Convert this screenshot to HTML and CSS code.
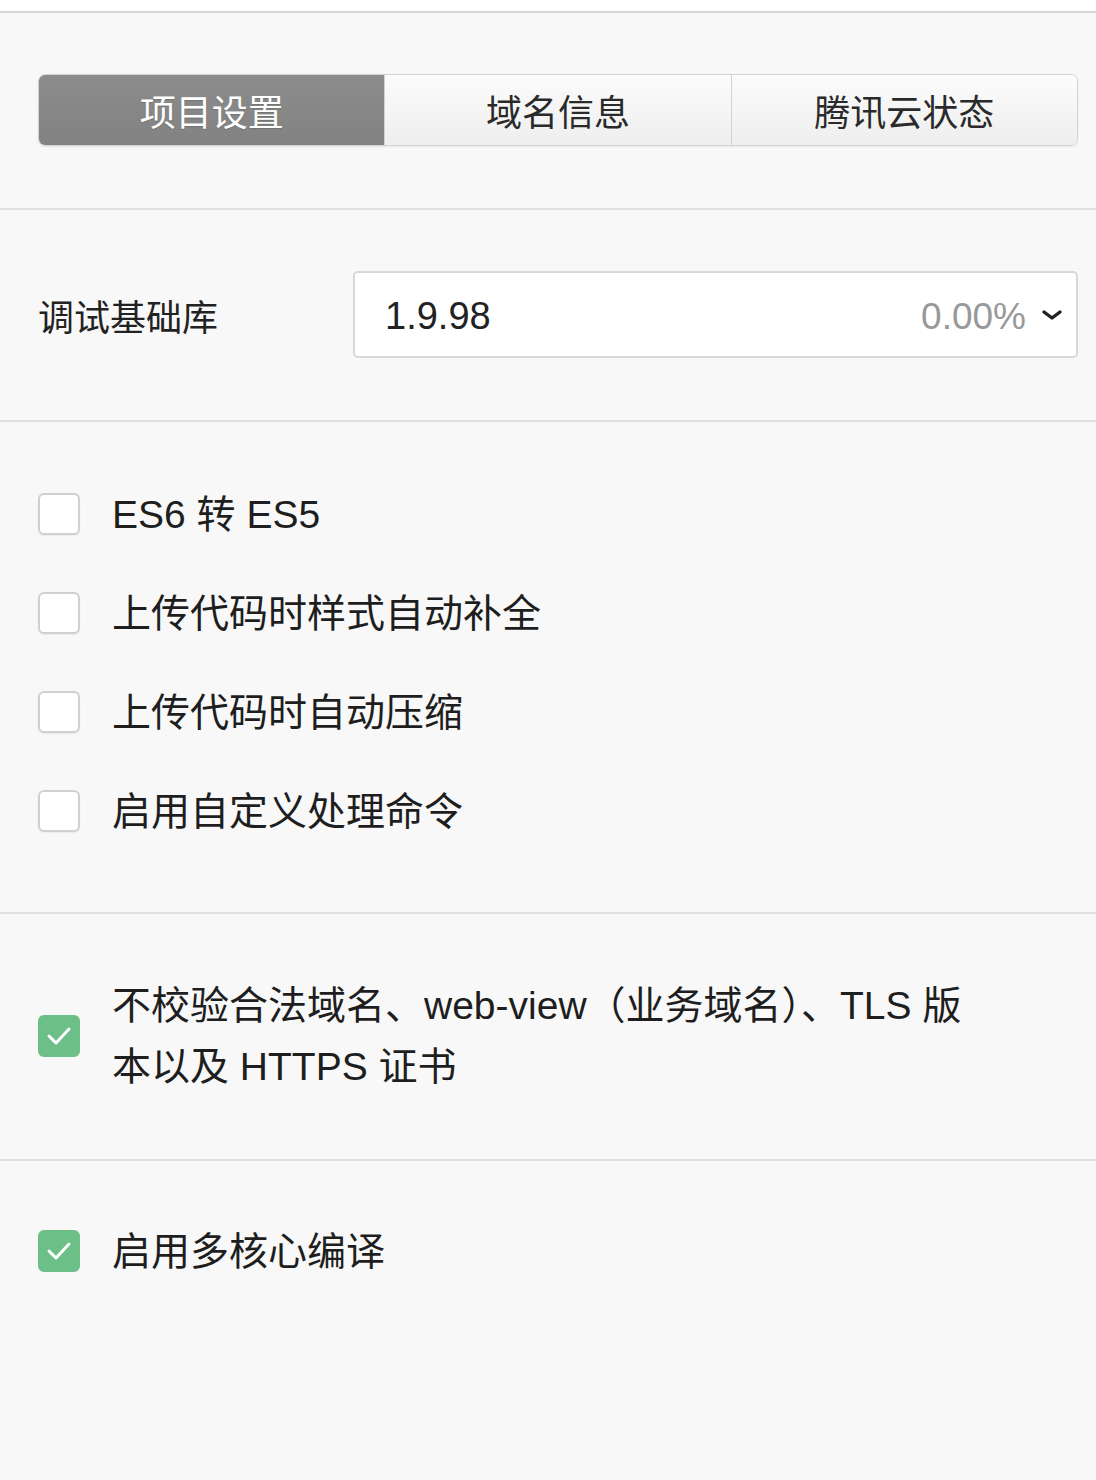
FILE: index.html
```html
<!DOCTYPE html>
<html lang="zh-CN">
<head>
    <meta charset="UTF-8">
    <meta name="viewport" content="width=device-width, initial-scale=1.0">
    <title>项目设置</title>
    <link rel="stylesheet" href="styles.css">
</head>
<body>
    <div class="top-bar"></div>

    <div class="section tabs-section">
        <div class="tabs">
            <div class="tab active">项目设置</div>
            <div class="tab">域名信息</div>
            <div class="tab">腾讯云状态</div>
        </div>
    </div>

    <div class="section lib-section">
        <label class="lib-label">调试基础库</label>
        <div class="select">
            <span class="select-value">1.9.98</span>
            <span class="select-rate">0.00%</span>
            <svg class="chevron" width="24" height="14" viewBox="0 0 24 14">
                <polyline points="4,4 12,10 20,4" fill="none" stroke="#222" stroke-width="3.4" stroke-linecap="round" stroke-linejoin="round"/>
            </svg>
        </div>
    </div>

    <div class="section options-section">
        <div class="option">
            <span class="checkbox"></span>
            <span class="option-text">ES6 转 ES5</span>
        </div>
        <div class="option">
            <span class="checkbox"></span>
            <span class="option-text">上传代码时样式自动补全</span>
        </div>
        <div class="option">
            <span class="checkbox"></span>
            <span class="option-text">上传代码时自动压缩</span>
        </div>
        <div class="option">
            <span class="checkbox"></span>
            <span class="option-text">启用自定义处理命令</span>
        </div>
    </div>

    <div class="section domain-section">
        <div class="option">
            <span class="checkbox checked">
                <svg width="28" height="22" viewBox="0 0 28 22"><polyline points="4,11 11,18 24,4" fill="none" stroke="#fff" stroke-width="3" stroke-linecap="round" stroke-linejoin="round"/></svg>
            </span>
            <span class="option-text">不校验合法域名、web-view（业务域名）、TLS 版本以及 HTTPS 证书</span>
        </div>
    </div>

    <div class="section multi-section">
        <div class="option">
            <span class="checkbox checked">
                <svg width="28" height="22" viewBox="0 0 28 22"><polyline points="4,11 11,18 24,4" fill="none" stroke="#fff" stroke-width="3" stroke-linecap="round" stroke-linejoin="round"/></svg>
            </span>
            <span class="option-text">启用多核心编译</span>
        </div>
    </div>
</body>
</html>
```

FILE: styles.css
```css
* {
    margin: 0;
    padding: 0;
    box-sizing: border-box;
}

body {
    font-family: 'Liberation Sans', 'Noto Sans CJK SC', sans-serif;
    background: #f8f8f8;
    color: #1e1e1e;
    min-height: 100vh;
}

.top-bar {
    height: 13px;
    background: #fff;
    border-bottom: 2px solid #d6d6d6;
}

.section {
    padding: 0 18px 0 38px;
    border-bottom: 2px solid #e0e0e0;
}

/* tabs */
.tabs-section {
    padding-top: 61px;
    padding-bottom: 62px;
}

.tabs {
    display: flex;
    height: 72px;
    border: 1px solid #d4d4d4;
    border-radius: 7px;
    overflow: hidden;
    box-shadow: 0 1px 2px rgba(0, 0, 0, 0.08);
}

.tab {
    flex: 1;
    display: flex;
    align-items: center;
    justify-content: center;
    font-size: 36px;
    color: #2a2a2a;
    background: linear-gradient(#fcfcfc, #eeeeee);
    border-left: 1px solid #d2d2d2;
}

.tab:first-child {
    border-left: none;
}

.tab.active {
    background: linear-gradient(#8c8c8c, #828282);
    color: #fff;
    text-shadow: 0 1px 1px rgba(0, 0, 0, 0.15);
}

/* base library */
.lib-section {
    display: flex;
    align-items: center;
    padding-top: 61px;
    padding-bottom: 62px;
}

.lib-label {
    width: 315px;
    font-size: 36px;
    color: #222;
}

.select {
    flex: 1;
    display: flex;
    align-items: center;
    height: 87px;
    padding: 4px 12px 0 30px;
    background: #fff;
    border: 2px solid #d8d8d8;
    border-radius: 5px;
}

.select-value {
    flex: 1;
    font-size: 38px;
    color: #222;
}

.select-rate {
    font-size: 37px;
    color: #999;
    margin-right: 14px;
}

.chevron {
    display: block;
    margin-top: -4px;
}

/* options */
.options-section {
    padding-top: 42px;
    padding-bottom: 52px;
}

.option {
    display: flex;
    align-items: center;
    height: 99px;
}

.checkbox {
    flex-shrink: 0;
    width: 42px;
    height: 42px;
    margin-right: 32px;
    background: #fff;
    border: 2px solid #d0d0d0;
    border-radius: 6px;
    box-shadow: 0 1px 2px rgba(0, 0, 0, 0.06);
    display: flex;
    align-items: center;
    justify-content: center;
}

.checkbox.checked {
    background: #6cbf87;
    border-color: #6cbf87;
    box-shadow: none;
}

.option-text {
    font-size: 39px;
    color: #1e1e1e;
    margin-top: -6px;
}

.domain-section {
    padding-top: 61px;
    padding-bottom: 62px;
}

.domain-section .option {
    height: auto;
}

.domain-section .option-text {
    line-height: 61px;
    max-width: 860px;
    margin-top: 0;
}

.multi-section {
    border-bottom: none;
    padding-top: 40px;
}
```
